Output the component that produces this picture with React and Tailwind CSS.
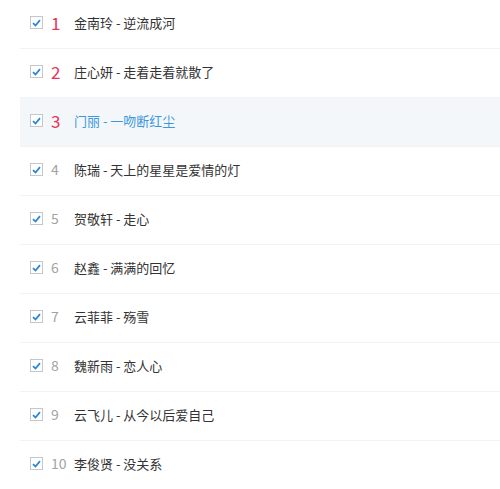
const songs = [
  { n: 1, title: '金南玲 - 逆流成河' },
  { n: 2, title: '庄心妍 - 走着走着就散了' },
  { n: 3, title: '门丽 - 一吻断红尘', active: true },
  { n: 4, title: '陈瑞 - 天上的星星是爱情的灯' },
  { n: 5, title: '贺敬轩 - 走心' },
  { n: 6, title: '赵鑫 - 满满的回忆' },
  { n: 7, title: '云菲菲 - 殇雪' },
  { n: 8, title: '魏新雨 - 恋人心' },
  { n: 9, title: '云飞儿 - 从今以后爱自己' },
  { n: 10, title: '李俊贤 - 没关系' },
];

function Check() {
  return (
    <span className="flex h-[13px] w-[13px] items-center justify-center border border-[#c4c7cc] bg-white">
      <svg width="9" height="8" viewBox="0 0 9 8">
        <path d="M1 4.2 L3.5 6.5 L8 1.2" fill="none" stroke="#2b86d6" strokeWidth="1.8" />
      </svg>
    </span>
  );
}

export default function App() {
  return (
    <div className="min-h-screen bg-white pl-5 font-['Noto_Sans_CJK_SC',sans-serif]">
      {songs.map((s) => (
        <div
          key={s.n}
          className={`flex h-[49px] items-center border-b border-[#f2f3f5] pb-[3px] pl-[10px] ${s.active ? 'bg-[#f4f7fa]' : ''}`}
        >
          <Check />
          <span
            className={`ml-[8px] w-[23px] ${s.n <= 3 ? 'text-[17px] text-[#e8345c]' : 'text-[14px] text-[#a3a3a3]'}`}
          >
            {s.n}
          </span>
          <span className={`text-[13px] ${s.active ? 'text-[#3d97df]' : 'text-[#333]'}`}>{s.title}</span>
        </div>
      ))}
    </div>
  );
}
